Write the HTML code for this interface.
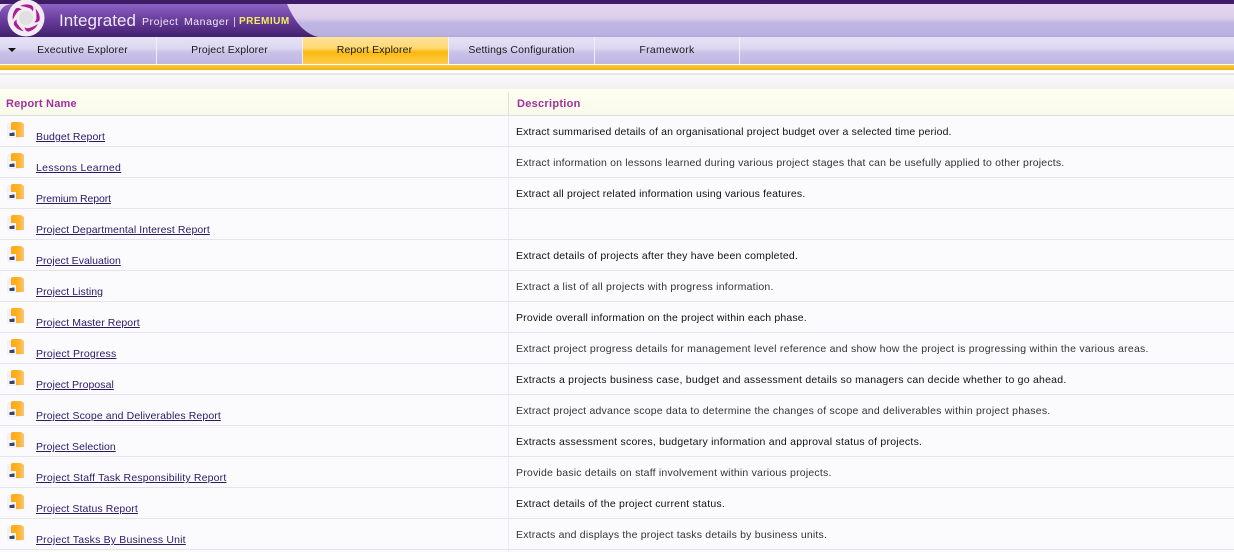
<!DOCTYPE html>
<html><head><meta charset="utf-8"><style>
html,body{margin:0;padding:0;width:1234px;height:552px;overflow:hidden;background:#fbfbfe;font-family:"Liberation Sans",sans-serif}
.a{position:absolute}
.t{position:absolute;white-space:nowrap}
.tab{position:absolute;top:37px;height:27px;background:linear-gradient(#e6e2f6 0,#dcd8f1 42%,#c8c1e8 58%,#bfb7e2 100%);border-right:1px solid #f2effa;text-align:center;font-size:10.5px;line-height:27px;color:#1a1a1a;letter-spacing:.13px;box-sizing:border-box}
.row{position:absolute;left:0;width:1234px;height:31px;border-bottom:1px solid #e4e4ea;box-sizing:border-box}
.row a{position:absolute;left:36px;top:15px;font-size:10.5px;line-height:13px;color:#2b1a66;text-decoration:underline;letter-spacing:.175px;white-space:nowrap}
.row span{position:absolute;left:516px;top:9px;font-size:10.5px;line-height:14px;color:#111;letter-spacing:.15px;white-space:nowrap}
.row span.g{color:#333}
.row svg{position:absolute;left:6px;top:5px}
</style></head><body>
<div class="a" style="left:0;top:0;width:1234px;height:4px;background:#401b66"></div>
<div class="a" style="left:0;top:4px;width:1234px;height:33px;background:linear-gradient(#e5d5ef 0,#dccdea 42%,#bfb6e2 58%,#bab1e0 94%,#b0a6da 100%)"></div>
<svg class="a" style="left:0;top:4px" width="320" height="33"><defs><linearGradient id="p" x1="0" y1="0" x2="0" y2="1"><stop offset="0" stop-color="#8e62c4"/><stop offset=".45" stop-color="#6a3f9d"/><stop offset="1" stop-color="#43206f"/></linearGradient></defs><path d="M0 33V8Q3 0 14 0H287C293 14 302 29 318 33Z" fill="url(#p)"/></svg>
<svg class="a" style="left:7px;top:0" width="38" height="37" viewBox="0 0 38 37"><defs><path id="arm" d="M13 6Q19 3 25 5.500Q27.500 8 25.500 11.500Q25 9 22 8Q18 6.500 13 6Z" fill="#ad1c94"/></defs><circle cx="19" cy="18" r="18.500" fill="#f1ecf2"/><circle cx="19" cy="18" r="7" fill="#e0e0e0"/><use href="#arm"/><use href="#arm" transform="rotate(72 19 18)"/><use href="#arm" transform="rotate(144 19 18)"/><use href="#arm" transform="rotate(216 19 18)"/><use href="#arm" transform="rotate(288 19 18)"/></svg>
<div class="t" style="left:59px;top:11px;font-size:17px;line-height:20px;color:#eee8f6;letter-spacing:.05px">Integrated</div>
<div class="t" style="left:142px;top:15px;font-size:10.5px;line-height:14px;color:#eee8f6;letter-spacing:.55px">Project</div>
<div class="t" style="left:184px;top:15px;font-size:10.5px;line-height:14px;color:#eee8f6;letter-spacing:.55px">Manager</div>
<div class="a" style="left:234px;top:17px;width:1px;height:10px;background:#cdbfe0"></div>
<div class="t" style="left:239px;top:15px;font-size:10px;line-height:14px;font-weight:bold;color:#f5ee5c;letter-spacing:.5px">PREMIUM</div>
<div class="a" style="left:0;top:37px;width:1234px;height:27px;background:linear-gradient(#e6e2f6 0,#dcd8f1 42%,#c8c1e8 58%,#bfb7e2 100%)"></div>
<div class="tab" style="left:0;width:157px;padding-left:9px;letter-spacing:.18px">Executive Explorer</div>
<div class="tab" style="left:157px;width:146px">Project Explorer</div>
<div class="tab" style="left:303px;width:146px;padding-right:2px;background:linear-gradient(#ffe39a 0,#ffd872 42%,#fbb90c 55%,#fccb4e 100%)">Report Explorer</div>
<div class="tab" style="left:449px;width:146px">Settings Configuration</div>
<div class="tab" style="left:595px;width:145px;letter-spacing:.3px">Framework</div>
<div class="a" style="left:8px;top:48px;width:0;height:0;border:4px solid transparent;border-top:4px solid #111;border-bottom:0"></div>
<div class="a" style="left:0;top:64px;width:1234px;height:1px;background:#fff"></div>
<div class="a" style="left:0;top:65px;width:1234px;height:5px;background:linear-gradient(#fcc93a,#f3b010)"></div>
<div class="a" style="left:0;top:70px;width:1234px;height:3px;background:#fff"></div>
<div class="a" style="left:0;top:73px;width:1234px;height:2px;background:#e6e6e6"></div>
<div class="a" style="left:0;top:75px;width:1234px;height:14px;background:linear-gradient(#f9f9f9,#f2f2f2)"></div>
<div class="a" style="left:0;top:89px;width:1234px;height:26px;background:linear-gradient(#fefff0,#f8faec);border-bottom:1px solid #dedede"></div>
<div class="a" style="left:508px;top:92px;width:1px;height:23px;background:#e2e2d4"></div>
<div class="t" style="left:6px;top:97px;font-size:11px;line-height:14px;font-weight:bold;color:#a0309c;letter-spacing:.22px">Report Name</div>
<div class="t" style="left:517px;top:97px;font-size:11px;line-height:14px;font-weight:bold;color:#a0309c;letter-spacing:.28px">Description</div>
<div class="a" style="left:508px;top:116px;width:1px;height:436px;background:#ececf2"></div>

<div class="row" style="top:116px"><svg width="20" height="18"><use href="#i"/></svg><a style="letter-spacing:.1px">Budget Report</a><span>Extract summarised details of an organisational project budget over a selected time period.</span></div>
<div class="row" style="top:147px"><svg width="20" height="18"><use href="#i"/></svg><a style="letter-spacing:.31px">Lessons Learned</a><span class="g" style="letter-spacing:.184px">Extract information on lessons learned during various project stages that can be usefully applied to other projects.</span></div>
<div class="row" style="top:178px"><svg width="20" height="18"><use href="#i"/></svg><a style="letter-spacing:-.11px">Premium Report</a><span style="letter-spacing:.166px">Extract all project related information using various features.</span></div>
<div class="row" style="top:209px"><svg width="20" height="18"><use href="#i"/></svg><a style="letter-spacing:.08px">Project Departmental Interest Report</a></div>
<div class="row" style="top:240px"><svg width="20" height="18"><use href="#i"/></svg><a style="letter-spacing:.01px">Project Evaluation</a><span style="letter-spacing:.2px">Extract details of projects after they have been completed.</span></div>
<div class="row" style="top:271px"><svg width="20" height="18"><use href="#i"/></svg><a style="letter-spacing:.075px">Project Listing</a><span class="g" style="letter-spacing:.22px">Extract a list of all projects with progress information.</span></div>
<div class="row" style="top:302px"><svg width="20" height="18"><use href="#i"/></svg><a style="letter-spacing:.08px">Project Master Report</a><span style="letter-spacing:.166px">Provide overall information on the project within each phase.</span></div>
<div class="row" style="top:333px"><svg width="20" height="18"><use href="#i"/></svg><a>Project Progress</a><span class="g" style="letter-spacing:.24px">Extract project progress details for management level reference and show how the project is progressing within the various areas.</span></div>
<div class="row" style="top:364px"><svg width="20" height="18"><use href="#i"/></svg><a style="letter-spacing:.05px">Project Proposal</a><span style="letter-spacing:.233px">Extracts a projects business case, budget and assessment details so managers can decide whether to go ahead.</span></div>
<div class="row" style="top:395px"><svg width="20" height="18"><use href="#i"/></svg><a style="letter-spacing:.107px">Project Scope and Deliverables Report</a><span class="g" style="letter-spacing:.214px">Extract project advance scope data to determine the changes of scope and deliverables within project phases.</span></div>
<div class="row" style="top:426px"><svg width="20" height="18"><use href="#i"/></svg><a style="letter-spacing:.057px">Project Selection</a><span style="letter-spacing:.235px">Extracts assessment scores, budgetary information and approval status of projects.</span></div>
<div class="row" style="top:457px"><svg width="20" height="18"><use href="#i"/></svg><a>Project Staff Task Responsibility Report</a><span class="g" style="letter-spacing:.21px">Provide basic details on staff involvement within various projects.</span></div>
<div class="row" style="top:488px"><svg width="20" height="18"><use href="#i"/></svg><a style="letter-spacing:.1px">Project Status Report</a><span style="letter-spacing:.217px">Extract details of the project current status.</span></div>
<div class="row" style="top:519px"><svg width="20" height="18"><use href="#i"/></svg><a>Project Tasks By Business Unit</a><span class="g" style="letter-spacing:.195px">Extracts and displays the project tasks details by business units.</span></div>
<svg width="0" height="0" style="position:absolute"><defs><linearGradient id="o" x1="0" y1="0" x2="1" y2="0"><stop offset="0" stop-color="#ffa90f"/><stop offset=".65" stop-color="#ffb52e"/><stop offset="1" stop-color="#f9c680"/></linearGradient><g id="i"><rect x="1" y="2" width="14" height="15" rx="2" fill="#f1eff8"/><path d="M5 3Q5 1 7 1H15L18 3V16H5Z" fill="url(#o)"/><rect x="2" y="9" width="8" height="7" fill="#f6f6fa"/><path d="M3.500 12H5.500L6.500 11.500H8.500V15H3.500Z" fill="#34466e"/></g></defs></svg>
</body></html>
